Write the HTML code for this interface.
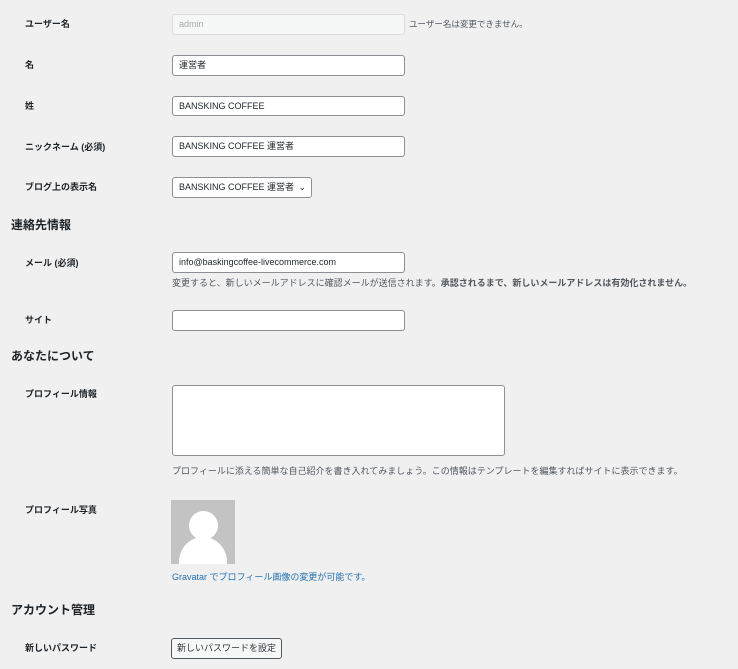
<!DOCTYPE html>
<html><head><meta charset="utf-8"><style>
body{margin:0;width:738px;height:669px;background:#f0f0f1;font-family:"Liberation Sans","Noto Sans CJK JP",sans-serif;color:#1d2327;position:relative;overflow:hidden}
.a{position:absolute}
.l{position:absolute;left:25px;font-size:9px;font-weight:bold;line-height:12px}
.h{position:absolute;left:11px;font-size:12px;font-weight:bold;line-height:14px}
.i{position:absolute;left:172px;width:231px;height:19px;border:1px solid #8c8f94;border-radius:3px;background:#fff;box-sizing:border-box;font-size:9px;line-height:17px;padding-left:6px}
.d{position:absolute;left:172px;font-size:9px;color:#50575e;line-height:12px;white-space:nowrap}
</style></head><body>
<div class="l" style="top:18px">ユーザー名</div>
<div class="i" style="top:14px;width:233px;height:21px;line-height:19px;background:#f6f7f7;border-color:#dcdcde;color:#a7aaad">admin</div>
<div class="d" style="left:409px;top:18px;font-size:8.5px">ユーザー名は変更できません。</div>
<div class="l" style="top:59px">名</div>
<div class="i" style="top:55px;width:233px;height:21px;line-height:19px">運営者</div>
<div class="l" style="top:100px">姓</div>
<div class="i" style="top:96px;width:233px;height:20px;line-height:18px">BANSKING COFFEE</div>
<div class="l" style="top:141px">ニックネーム (必須)</div>
<div class="i" style="top:136px;width:233px;height:21px;line-height:19px">BANSKING COFFEE 運営者</div>
<div class="l" style="top:181px">ブログ上の表示名</div>
<div class="i" style="top:177px;width:140px;height:21px;line-height:19px">BANSKING COFFEE 運営者 <span style="position:absolute;right:5px;top:0">&#8964;</span></div>
<div class="h" style="top:218px">連絡先情報</div>
<div class="l" style="top:257px">メール (必須)</div>
<div class="i" style="top:252px;width:233px;height:21px;line-height:19px">info@baskingcoffee-livecommerce.com</div>
<div class="d" style="top:277px">変更すると、新しいメールアドレスに確認メールが送信されます。<b>承認されるまで、新しいメールアドレスは有効化されません。</b></div>
<div class="l" style="top:314px">サイト</div>
<div class="i" style="top:310px;width:233px;height:21px"></div>
<div class="h" style="top:349px">あなたについて</div>
<div class="l" style="top:388px">プロフィール情報</div>
<div class="i" style="top:385px;width:333px;height:71px"></div>
<div class="d" style="top:465px">プロフィールに添える簡単な自己紹介を書き入れてみましょう。この情報はテンプレートを編集すればサイトに表示できます。</div>
<div class="l" style="top:504px">プロフィール写真</div>
<div class="a" style="left:171px;top:500px;width:64px;height:64px;background:#c3c3c3;overflow:hidden">
<div class="a" style="left:18px;top:11px;width:29px;height:29px;border-radius:50%;background:#fff"></div>
<div class="a" style="left:8px;top:37px;width:48px;height:50px;border-radius:50% 50% 0 0;background:#fff"></div>
</div>
<div class="d" style="top:571px;color:#2271b1">Gravatar でプロフィール画像の変更が可能です。</div>
<div class="h" style="top:603px">アカウント管理</div>
<div class="l" style="top:642px">新しいパスワード</div>
<div class="a" style="left:171px;top:638px;width:111px;height:21px;border:1px solid #50575e;border-radius:3px;background:#f6f7f7;box-sizing:border-box;font-size:9px;line-height:19px;text-align:center;color:#2c3338">新しいパスワードを設定</div>
</body></html>
